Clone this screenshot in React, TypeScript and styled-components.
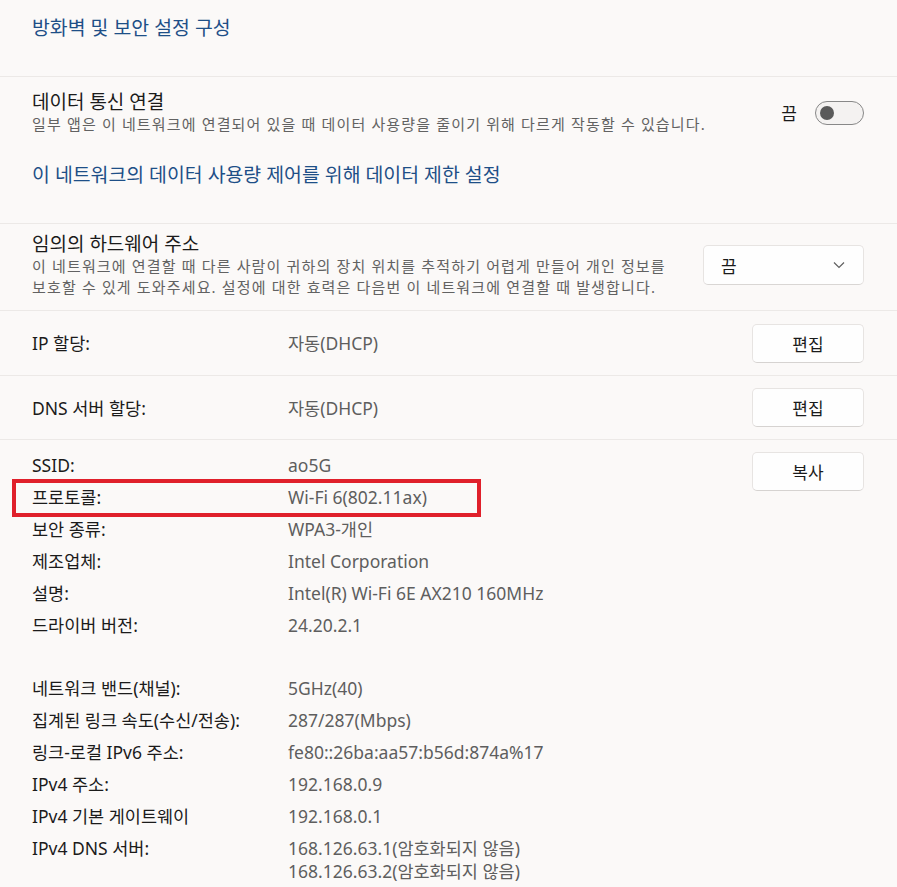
import React from "react";
import styled, { createGlobalStyle } from "styled-components";

const GlobalStyle = createGlobalStyle`
  html, body {
    margin: 0;
    padding: 0;
    background: #fbf9f8;
  }
  body {
    font-family: "Noto Sans", "Noto Sans CJK KR", sans-serif;
    color: #1b1b1b;
  }
`;

const Page = styled.main`
  width: 897px;
  height: 887px;
  overflow: hidden;
  background: #fbf9f8;
`;

const Section = styled.section<{ $pt: number; $pb: number }>`
  padding: ${(p) => p.$pt}px 33px ${(p) => p.$pb}px 32px;
  border-bottom: 1px solid #ece9e7;
`;

const LinkText = styled.a<{ $mt?: number }>`
  display: block;
  margin-top: ${(p) => p.$mt ?? 0}px;
  font-size: 19.4px;
  line-height: 26px;
  color: #1e4f87;
  text-decoration: none;
`;

const SettingRow = styled.div`
  display: flex;
  align-items: center;
  justify-content: space-between;
`;

const TitleBlock = styled.div`
  display: flex;
  flex-direction: column;
`;

const Title = styled.div`
  font-size: 19px;
  line-height: 24px;
  color: #1b1b1b;
`;

const Desc = styled.div`
  font-size: 15px;
  letter-spacing: 1.15px;
  line-height: 21px;
  color: #626262;
`;

const ToggleWrap = styled.div`
  display: flex;
  align-items: center;
  gap: 18px;
  font-size: 17px;
`;

const Toggle = styled.div`
  width: 49px;
  height: 24px;
  box-sizing: border-box;
  border: 1.5px solid #888;
  border-radius: 12px;
  background: #f4f2f1;
  display: flex;
  align-items: center;
  padding-left: 4px;
`;

const Knob = styled.span`
  width: 14px;
  height: 14px;
  border-radius: 50%;
  background: #5a5a5a;
`;

const Dropdown = styled.div`
  width: 161px;
  height: 40px;
  box-sizing: border-box;
  border: 1px solid #e7e4e2;
  border-bottom-color: #d9d6d4;
  border-radius: 5px;
  background: #fefefe;
  display: flex;
  align-items: center;
  justify-content: space-between;
  padding: 0 18px 0 17px;
  font-size: 17px;
`;

const Button = styled.button`
  width: 112px;
  height: 39px;
  box-sizing: border-box;
  border: 1px solid #e7e4e2;
  border-bottom-color: #d6d3d1;
  border-radius: 5px;
  background: #fefefe;
  font-family: inherit;
  font-size: 17px;
  color: #1b1b1b;
  flex-shrink: 0;
`;

const InfoRow = styled.div<{ $h: number }>`
  display: flex;
  align-items: center;
  justify-content: space-between;
  height: ${(p) => p.$h}px;
`;

const Pair = styled.div`
  display: grid;
  grid-template-columns: 256px auto;
  font-size: 17.5px;
  line-height: 24px;
`;

const Label = styled.span`
  color: #1b1b1b;
`;

const Value = styled.span`
  color: #5e5e5e;
`;

const Details = styled.section`
  display: flex;
  justify-content: space-between;
  align-items: flex-start;
  padding: 9px 33px 0 32px;
`;

const DetailList = styled.div`
  display: flex;
  flex-direction: column;
`;

const DetailRow = styled.div<{ $gapTop?: boolean }>`
  position: relative;
  display: grid;
  grid-template-columns: 256px auto;
  font-size: 17.5px;
  line-height: 32px;
  margin-top: ${(p) => (p.$gapTop ? 31 : 0)}px;
`;

const ValueLines = styled.div`
  display: flex;
  flex-direction: column;
  color: #5e5e5e;
  & > span {
    line-height: 23px;
  }
  & > span:first-child {
    line-height: 32px;
  }
  & > span + span {
    margin-top: -4px;
  }
`;

const Highlight = styled.div`
  position: absolute;
  left: -20px;
  top: -2px;
  width: 469px;
  height: 38px;
  box-sizing: border-box;
  border: 4px solid #e0202b;
  pointer-events: none;
`;

const CopyButton = styled(Button)`
  margin-top: 3px;
`;

const Chevron = () => (
  <svg width="12" height="8" viewBox="0 0 12 8" fill="none">
    <path d="M1 1.5 L6 6.5 L11 1.5" stroke="#606060" strokeWidth="1.2" />
  </svg>
);

const firstDetails: [string, string][] = [
  ["SSID:", "ao5G"],
  ["프로토콜:", "Wi-Fi 6(802.11ax)"],
  ["보안 종류:", "WPA3-개인"],
  ["제조업체:", "Intel Corporation"],
  ["설명:", "Intel(R) Wi-Fi 6E AX210 160MHz"],
  ["드라이버 버전:", "24.20.2.1"],
];

const secondDetails: [string, string[]][] = [
  ["네트워크 밴드(채널):", ["5GHz(40)"]],
  ["집계된 링크 속도(수신/전송):", ["287/287(Mbps)"]],
  ["링크-로컬 IPv6 주소:", ["fe80::26ba:aa57:b56d:874a%17"]],
  ["IPv4 주소:", ["192.168.0.9"]],
  ["IPv4 기본 게이트웨이", ["192.168.0.1"]],
  ["IPv4 DNS 서버:", ["168.126.63.1(암호화되지 않음)", "168.126.63.2(암호화되지 않음)"]],
];

export default function App() {
  return (
    <Page>
      <GlobalStyle />
      <Section $pt={15} $pb={35}>
        <LinkText href="#">방화벽 및 보안 설정 구성</LinkText>
      </Section>

      <Section $pt={13} $pb={35}>
        <SettingRow>
          <TitleBlock>
            <Title>데이터 통신 연결</Title>
            <Desc>일부 앱은 이 네트워크에 연결되어 있을 때 데이터 사용량을 줄이기 위해 다르게 작동할 수 있습니다.</Desc>
          </TitleBlock>
          <ToggleWrap>
            끔
            <Toggle>
              <Knob />
            </Toggle>
          </ToggleWrap>
        </SettingRow>
        <LinkText href="#" $mt={27}>
          이 네트워크의 데이터 사용량 제어를 위해 데이터 제한 설정
        </LinkText>
      </Section>

      <Section $pt={8} $pb={12}>
        <SettingRow>
          <TitleBlock>
            <Title>임의의 하드웨어 주소</Title>
            <Desc>
              이 네트워크에 연결할 때 다른 사람이 귀하의 장치 위치를 추적하기 어렵게 만들어 개인 정보를
              <br />
              보호할 수 있게 도와주세요. 설정에 대한 효력은 다음번 이 네트워크에 연결할 때 발생합니다.
            </Desc>
          </TitleBlock>
          <Dropdown>
            끔
            <Chevron />
          </Dropdown>
        </SettingRow>
      </Section>

      <Section $pt={0} $pb={0}>
        <InfoRow $h={64}>
          <Pair>
            <Label>IP 할당:</Label>
            <Value>자동(DHCP)</Value>
          </Pair>
          <Button>편집</Button>
        </InfoRow>
      </Section>

      <Section $pt={0} $pb={0}>
        <InfoRow $h={63}>
          <Pair>
            <Label>DNS 서버 할당:</Label>
            <Value>자동(DHCP)</Value>
          </Pair>
          <Button>편집</Button>
        </InfoRow>
      </Section>

      <Details>
        <DetailList>
          {firstDetails.map(([label, value], i) => (
            <DetailRow key={label}>
              <Label>{label}</Label>
              <Value>{value}</Value>
              {i === 1 && <Highlight />}
            </DetailRow>
          ))}
          {secondDetails.map(([label, values], i) => (
            <DetailRow key={label} $gapTop={i === 0}>
              <Label>{label}</Label>
              <ValueLines>
                {values.map((v) => (
                  <span key={v}>{v}</span>
                ))}
              </ValueLines>
            </DetailRow>
          ))}
        </DetailList>
        <CopyButton>복사</CopyButton>
      </Details>
    </Page>
  );
}
